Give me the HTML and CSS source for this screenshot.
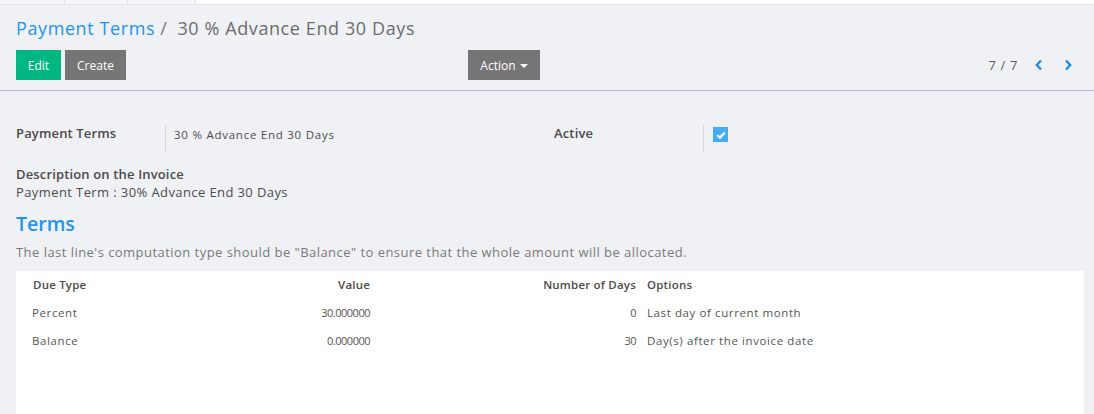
FILE: index.html
```html
<!DOCTYPE html>
<html>
<head>
<meta charset="utf-8">
<link rel="stylesheet" href="styles.css">
</head>
<body>
<div class="tabs">
  <div class="tab"></div>
  <div class="tab"></div>
  <div class="tab"></div>
  <div class="tab-fill"></div>
</div>
<div class="control">
  <div class="breadcrumb"><a class="crumb">Payment Terms</a><span class="sep">/</span><span class="current">30 % Advance End 30 Days</span></div>
  <div class="buttons">
    <div class="left">
      <button class="btn primary">Edit</button>
      <button class="btn secondary">Create</button>
    </div>
    <div class="middle">
      <button class="btn secondary action">Action <span class="caret"></span></button>
    </div>
    <div class="pager">
      <span class="pager-val">7 / 7</span>
      <svg class="chev" width="10" height="12" viewBox="0 0 10 12"><path d="M7 1.5 L2.8 6 L7 10.5" fill="none" stroke="#1a91eb" stroke-width="2.4"/></svg>
      <svg class="chev" width="10" height="12" viewBox="0 0 10 12"><path d="M3 1.5 L7.2 6 L3 10.5" fill="none" stroke="#1a91eb" stroke-width="2.4"/></svg>
    </div>
  </div>
</div>
<div class="sheet">
  <div class="fields">
    <div class="field">
      <div class="label">Payment Terms</div>
      <div class="value">30 % Advance End 30 Days</div>
    </div>
    <div class="field">
      <div class="label">Active</div>
      <div class="value"><span class="check"><svg width="14" height="14" viewBox="0 0 14 14"><path d="M3.3 7.2 L6 9.6 L10.8 4.6" fill="none" stroke="#fff" stroke-width="2.2"/></svg></span></div>
    </div>
  </div>
  <div class="desc">
    <div class="label">Description on the Invoice</div>
    <div class="desc-val">Payment Term : 30% Advance End 30 Days</div>
  </div>
  <h2 class="section">Terms</h2>
  <p class="help">The last line's computation type should be "Balance" to ensure that the whole amount will be allocated.</p>
  <div class="table-wrap">
    <table>
      <thead>
        <tr><th class="c1">Due Type</th><th class="c2 num">Value</th><th class="c3 num">Number of Days</th><th class="c4">Options</th><th></th></tr>
      </thead>
      <tbody>
        <tr><td>Percent</td><td class="num">30.000000</td><td class="num">0</td><td>Last day of current month</td><td></td></tr>
        <tr><td>Balance</td><td class="num">0.000000</td><td class="num">30</td><td>Day(s) after the invoice date</td><td></td></tr>
      </tbody>
    </table>
  </div>
</div>
</body>
</html>
```
FILE: styles.css
```css
* { box-sizing: border-box; }
html, body { margin: 0; padding: 0; }
body {
  background: #f0f1f5;
  font-family: "Open Sans", "Noto Sans", sans-serif;
  color: #4c4c4c;
  width: 1094px;
  height: 414px;
  overflow: hidden;
}
.tabs {
  display: flex;
  height: 5px;
  border-bottom: 1px solid #e3e5ea;
}
.tab {
  width: 65px;
  background: #f4f6f9;
  border-right: 1px solid #e3e5ea;
}
.tab:nth-child(2) { width: 63px; }
.tab:nth-child(3) { width: 68px; }
.tab-fill { flex: 1; background: #fff; }
.control {
  padding: 11px 16px 0 16px;
  border-bottom: 1px solid #b2bed3;
  height: 86px;
}
.breadcrumb {
  font-size: 18px;
  letter-spacing: 0.6px;
  line-height: 24px;
  height: 24px;
  color: #6c6c6c;
}
.crumb { color: #1f93f0; }
.sep { margin: 0 10px 0 5px; color: #777; }
.buttons {
  display: flex;
  align-items: center;
  margin-top: 10px;
  height: 30px;
}
.left { display: flex; gap: 4px; width: 452px; }
.middle { flex: 1; }
.btn {
  border: none;
  height: 30px;
  font-family: inherit;
  font-size: 12px;
  color: #fff;
  padding: 0;
  border-radius: 0;
}
.primary { background: #00b781; width: 45px; }
.secondary { background: #757575; width: 61px; }
.action { width: 72px; }
.caret {
  display: inline-block;
  width: 0; height: 0;
  border-left: 4px solid transparent;
  border-right: 4px solid transparent;
  border-top: 4px solid #fff;
  vertical-align: middle;
  margin-left: 1px;
}
.pager { display: flex; align-items: center; font-size: 13px; letter-spacing: 0.6px; color: #5a5a5a; margin-right: 5px; }
.pager-val { margin-right: 16px; }
.chev + .chev { margin-left: 19px; }
.sheet { padding: 0 10px 0 16px; }
.fields { display: flex; padding-top: 34px; }
.field { display: flex; flex: 0 0 538px; }
.field + .field { flex: 1 1 auto; }
.field .label {
  width: 150px;
  flex: 0 0 150px;
  font-size: 13px;
  letter-spacing: 0.15px;
  font-weight: 600;
  color: #4a4a4a;
  line-height: 17px;
  border-right: 1px solid #d8d9dd;
  height: 28px;
}
.field .value {
  padding-left: 8px;
  padding-top: 2px;
  font-size: 11.5px;
  letter-spacing: 0.75px;
  line-height: 16px;
  color: #4c4c4c;
}
.field + .field .value { padding-left: 9px; padding-top: 2px; }
.check {
  display: inline-flex;
  width: 15px; height: 15px;
  background: #45abf3;
  align-items: center;
  justify-content: center;
}
.desc { margin-top: 12px; }
.desc .label { font-size: 13px; letter-spacing: 0.15px; font-weight: 600; color: #4a4a4a; line-height: 18px; }
.desc-val { font-size: 13px; letter-spacing: 0.4px; color: #4c4c4c; line-height: 18px; }
.section {
  margin: 11px 0 0 0;
  font-size: 19.5px;
  line-height: 24px;
  font-weight: 600;
  color: #1f93f0;
}
.help { margin: 7px 0 0 0; font-size: 13px; letter-spacing: 0.46px; line-height: 18px; color: #7a7a7a; }
.table-wrap {
  margin-top: 10px;
  background: #fff;
  width: 1068px;
  height: 160px;
}
table { border-collapse: collapse; width: 100%; font-size: 11.5px; letter-spacing: 0.6px; }
th { font-weight: 600; color: #4a4a4a; text-align: left; height: 27px; padding: 0; letter-spacing: 0.2px; }
td { height: 28px; padding: 0; color: #555; }
td.num { font-size: 11px; letter-spacing: -0.5px; padding-right: 0; }
.c1 { width: 238px; padding-left: 17px; }
td:first-child { padding-left: 16px; }
.c2 { width: 116px; }
.c3 { width: 266px; }
.c4 { width: 420px; padding-left: 11px; }
td:nth-child(4) { padding-left: 11px; }
.num { text-align: right; }
```
